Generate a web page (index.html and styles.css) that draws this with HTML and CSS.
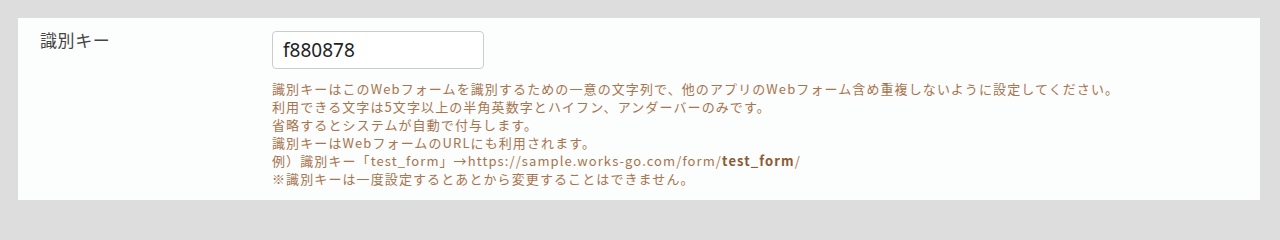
FILE: index.html
```html
<!DOCTYPE html>
<html lang="ja">
<head>
<meta charset="utf-8">
<link rel="stylesheet" href="styles.css">
</head>
<body>
<div class="page">
  <div class="panel">
    <div class="row">
      <div class="label">識別キー</div>
      <div class="field">
        <input class="input" type="text" value="f880878">
        <div class="help">
          <p>識別キーはこのWebフォームを識別するための一意の文字列で、他のアプリのWebフォーム含め重複しないように設定してください。</p>
          <p>利用できる文字は5文字以上の半角英数字とハイフン、アンダーバーのみです。</p>
          <p>省略するとシステムが自動で付与します。</p>
          <p>識別キーはWebフォームのURLにも利用されます。</p>
          <p>例）識別キー「test_form」→https://sample.works-go.com/form/<b>test_form</b>/</p>
          <p>※識別キーは一度設定するとあとから変更することはできません。</p>
        </div>
      </div>
    </div>
  </div>
</div>
</body>
</html>
```
FILE: styles.css
```css
html, body {
  margin: 0;
  padding: 0;
  background: #dddddd;
}
.page {
  padding: 18px 20px 19px 18px;
  font-family: "Noto Sans CJK JP", "Noto Sans", sans-serif;
}
.panel {
  background: #fcfdfd;
  padding: 13px 0 12px 22px;
}
.row {
  display: flex;
}
.label {
  width: 232px;
  font-size: 17px;
  line-height: 18px;
  color: #444444;
  letter-spacing: 0.6px;
}
.field {
  display: flex;
  flex-direction: column;
}
.input {
  box-sizing: border-box;
  width: 212px;
  height: 38px;
  border: 1px solid #cccccc;
  border-radius: 4px;
  padding: 0 10px;
  font-family: "Noto Sans", sans-serif;
  font-size: 19px;
  color: #222222;
  background: #ffffff;
  margin: 0;
  outline: none;
}
.help {
  margin-top: 11px;
  color: #a8744d;
  font-size: 13px;
  line-height: 18px;
  letter-spacing: 1.1px;
}
.help p {
  margin: 0;
}
.help b {
  font-weight: 700;
  color: #8e5a33;
}
```
